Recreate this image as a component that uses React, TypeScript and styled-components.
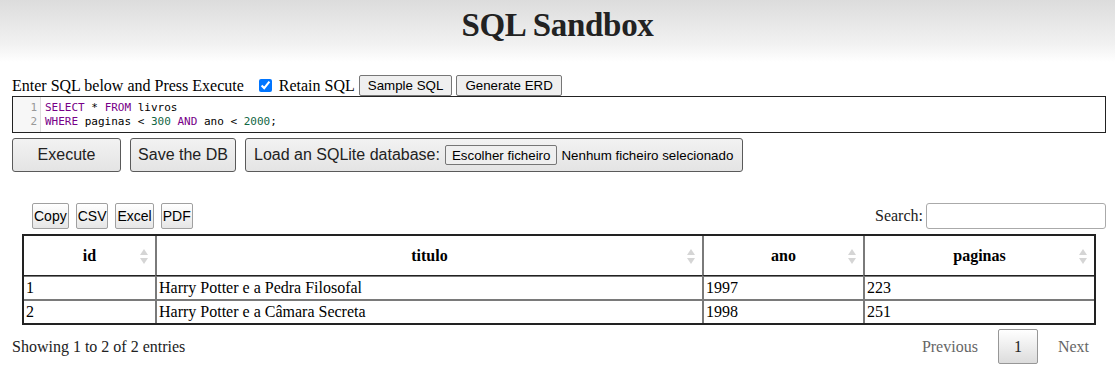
import React, { ReactElement } from 'react';
import styled, { createGlobalStyle } from 'styled-components';

const GlobalStyle = createGlobalStyle`
  html, body {
    margin: 0;
    padding: 0;
    background: #fff;
  }
  body {
    font-family: "Liberation Serif", "Times New Roman", serif;
    font-size: 16px;
    color: #000;
  }
`;

const Header = styled.header`
  height: 62px;
  background: linear-gradient(to bottom, #dcdcdc 0%, #f2f2f2 45px, #fff 62px);
  display: flex;
  justify-content: center;
  align-items: flex-start;
`;

const Title = styled.h1`
  margin: 7px 0 0;
  font-size: 33px;
  font-weight: 700;
  color: #222;
  letter-spacing: -0.3px;
`;

const Page = styled.main`
  padding: 13px 9px 0 12px;
`;

const TopRow = styled.div`
  display: flex;
  align-items: center;
  height: 21px;
`;

const Label = styled.span`
  font-size: 16px;
  line-height: 21px;
`;

const CheckWrap = styled.label`
  display: flex;
  align-items: center;
  margin-left: 15px;
  gap: 7px;
  font-size: 16px;
`;

const Check = styled.input`
  width: 13px;
  height: 13px;
  margin: 0;
  accent-color: #0075ff;
`;

const SmallButton = styled.button`
  font-family: Arial, "Liberation Sans", sans-serif;
  font-size: 13.33px;
  height: 21px;
  padding: 0 8px;
  margin-left: 4px;
  background: #efefef;
  border: 1px solid #767676;
  border-radius: 2px;
  color: #000;
`;

const Editor = styled.div`
  display: flex;
  border: 1px solid #222;
  height: 35px;
  background: #fff;
`;

const Gutter = styled.div`
  width: 28px;
  background: #f7f7f7;
  border-right: 1px solid #ddd;
  padding-top: 4px;
  font-family: "DejaVu Sans Mono", monospace;
  font-size: 11px;
  line-height: 14px;
  color: #999;
  text-align: right;
  box-sizing: border-box;
  padding-right: 3px;
`;

const Code = styled.pre`
  margin: 0;
  padding: 4px 0 0 4px;
  font-family: "DejaVu Sans Mono", monospace;
  font-size: 11px;
  line-height: 14px;
  color: #000;
`;

const Kw = styled.span`
  color: #770088;
`;

const Num = styled.span`
  color: #116644;
`;

const ActionRow = styled.div`
  display: flex;
  gap: 9px;
  margin-top: 5px;
`;

const BigButton = styled.button<{ $w: number }>`
  width: ${(p) => p.$w}px;
  height: 34px;
  font-family: Arial, "Liberation Sans", sans-serif;
  font-size: 16px;
  color: #222;
  background: linear-gradient(to bottom, #f2f2f2, #e4e4e4);
  border: 1px solid #5a5a5a;
  border-radius: 3px;
  padding: 0;
`;

const LoadBox = styled.label`
  width: 498px;
  height: 34px;
  box-sizing: border-box;
  display: flex;
  align-items: center;
  padding-left: 8px;
  font-family: Arial, "Liberation Sans", sans-serif;
  font-size: 16px;
  color: #222;
  background: linear-gradient(to bottom, #f2f2f2, #e4e4e4);
  border: 1px solid #5a5a5a;
  border-radius: 3px;
`;

const FileButton = styled.span`
  margin-left: 5px;
  height: 20px;
  box-sizing: border-box;
  display: flex;
  align-items: center;
  padding: 0 6px;
  font-size: 13.33px;
  color: #000;
  background: #efefef;
  border: 1px solid #767676;
  border-radius: 2px;
`;

const FileName = styled.span`
  margin-left: 4px;
  font-size: 13.33px;
  color: #000;
`;

const Toolbar = styled.div`
  display: flex;
  align-items: center;
  margin-top: 31px;
  padding-left: 20px;
  height: 26px;
`;

const DtButton = styled.button`
  height: 26px;
  padding: 0 1px;
  margin-right: 7px;
  font-family: Arial, "Liberation Sans", sans-serif;
  font-size: 14px;
  color: #000;
  background: linear-gradient(to bottom, #fff, #e6e6e6);
  border: 1px solid #a0a0a0;
  border-radius: 2px;
`;

const Search = styled.label`
  margin-left: auto;
  display: flex;
  align-items: center;
  gap: 3px;
  font-size: 16px;
  color: #222;
`;

const SearchInput = styled.input`
  width: 180px;
  height: 26px;
  box-sizing: border-box;
  border: 1px solid #aaa;
  border-radius: 3px;
  margin: 0;
`;

const Table = styled.table`
  margin: 5px 0 0 10px;
  width: 1074px;
  border-collapse: separate;
  border-spacing: 0;
  border: 2px solid #222;
  table-layout: fixed;
`;

const Th = styled.th<{ $w: number }>`
  width: ${(p) => p.$w}px;
  height: 39px;
  position: relative;
  border-left: 2px solid #7a7a7a;
  border-bottom: 1px solid #222;
  font-size: 16px;
  font-weight: 700;
  text-align: center;
  padding: 0;
  &:first-child {
    border-left: none;
  }
`;

const SortIcon = styled.svg`
  position: absolute;
  right: 7px;
  top: 13px;
`;

const Td = styled.td`
  height: 22px;
  border-left: 2px solid #7a7a7a;
  border-top: 2px solid #7a7a7a;
  padding: 0 2px;
  font-size: 16px;
  text-align: left;
  &:first-child {
    border-left: none;
  }
`;

const Row = styled.tr`
  &:first-child td {
    border-top: 1px solid #7a7a7a;
  }
`;

const Footer = styled.div`
  display: flex;
  align-items: center;
  justify-content: space-between;
  margin-top: 4px;
  padding-right: 16px;
`;

const Info = styled.div`
  font-size: 16px;
  color: #222;
`;

const Pager = styled.div`
  display: flex;
  align-items: center;
`;

const PageLink = styled.span<{ $active?: boolean }>`
  font-size: 16px;
  height: 35px;
  box-sizing: border-box;
  display: flex;
  align-items: center;
  padding: 0 ${(p) => (p.$active ? '15px' : '19px')};
  color: ${(p) => (p.$active ? '#222' : '#666')};
  background: ${(p) => (p.$active ? 'linear-gradient(to bottom, #fff, #dcdcdc)' : 'none')};
  border: 1px solid ${(p) => (p.$active ? '#979797' : 'transparent')};
  border-radius: 2px;
  &:last-child {
    padding-right: 0;
  }
`;

const Sort = (): ReactElement => (
  <SortIcon width="8" height="15" viewBox="0 0 8 15">
    <path d="M4 0 L8 6 H0 Z" fill="#d5d5d5" />
    <path d="M0 9 H8 L4 15 Z" fill="#d5d5d5" />
  </SortIcon>
);

const columns = [
  { name: 'id', w: 131 },
  { name: 'titulo', w: 545 },
  { name: 'ano', w: 159 },
  { name: 'paginas', w: 229 },
];

const rows = [
  ['1', 'Harry Potter e a Pedra Filosofal', '1997', '223'],
  ['2', 'Harry Potter e a Câmara Secreta', '1998', '251'],
];

const App = (): ReactElement => {
  return (
    <>
      <GlobalStyle />
      <Header>
        <Title>SQL Sandbox</Title>
      </Header>
      <Page>
        <TopRow>
          <Label>Enter SQL below and Press Execute</Label>
          <CheckWrap>
            <Check type="checkbox" defaultChecked />
            Retain SQL
          </CheckWrap>
          <SmallButton>Sample SQL</SmallButton>
          <SmallButton>Generate ERD</SmallButton>
        </TopRow>
        <Editor>
          <Gutter>
            1<br />2
          </Gutter>
          <Code>
            <Kw>SELECT</Kw> * <Kw>FROM</Kw> livros{'\n'}
            <Kw>WHERE</Kw> paginas &lt; <Num>300</Num> <Kw>AND</Kw> ano &lt; <Num>2000</Num>;
          </Code>
        </Editor>
        <ActionRow>
          <BigButton $w={109}>Execute</BigButton>
          <BigButton $w={106}>Save the DB</BigButton>
          <LoadBox>
            Load an SQLite database:
            <FileButton>Escolher ficheiro</FileButton>
            <FileName>Nenhum ficheiro selecionado</FileName>
          </LoadBox>
        </ActionRow>
        <Toolbar>
          <DtButton>Copy</DtButton>
          <DtButton>CSV</DtButton>
          <DtButton>Excel</DtButton>
          <DtButton>PDF</DtButton>
          <Search>
            Search:
            <SearchInput type="text" />
          </Search>
        </Toolbar>
        <Table>
          <thead>
            <tr>
              {columns.map((c) => (
                <Th key={c.name} $w={c.w}>
                  {c.name}
                  <Sort />
                </Th>
              ))}
            </tr>
          </thead>
          <tbody>
            {rows.map((r) => (
              <Row key={r[0]}>
                {r.map((v, i) => (
                  <Td key={i}>{v}</Td>
                ))}
              </Row>
            ))}
          </tbody>
        </Table>
        <Footer>
          <Info>Showing 1 to 2 of 2 entries</Info>
          <Pager>
            <PageLink>Previous</PageLink>
            <PageLink $active>1</PageLink>
            <PageLink>Next</PageLink>
          </Pager>
        </Footer>
      </Page>
    </>
  );
};

export default App;
